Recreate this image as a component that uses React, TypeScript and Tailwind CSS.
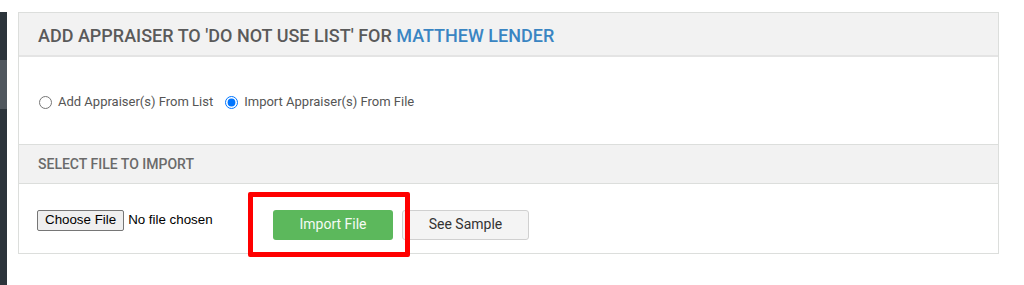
export default function App() {
  return (
    <div className="relative flex h-[285px] w-[1024px] bg-white" style={{ fontFamily: "Roboto, 'Liberation Sans', sans-serif" }}>
      {/* Sidebar edge */}
      <div className="flex w-[7px] flex-col pt-[12px]">
        <div className="h-[48px] bg-[#2c343b]" />
        <div className="h-[49px] bg-[#50575e]" />
        <div className="flex-1 bg-[#2c343b]" />
      </div>

      <div className="ml-[11px] mt-[12px] w-[981px]">
        <div className="border border-[#dcdedc] bg-white">
          {/* Header */}
          <div className="flex h-[44px] items-center border-b-2 border-[#e4e4e4] bg-[#f2f2f2] px-[19px] pt-[2px]">
            <h2 className="text-[18px] font-medium uppercase text-[#5a5a5a]">
              Add Appraiser to 'Do Not Use List' for <span className="text-[#3a85c2]">Matthew Lender</span>
            </h2>
          </div>

          {/* Mode choice */}
          <div className="flex h-[87px] items-center gap-[12px] px-[20px] pt-[3px] text-[13px] text-[#555]">
            <label className="flex items-center gap-[6px]">
              <input type="radio" name="mode" className="m-0 h-[13px] w-[13px]" />
              Add Appraiser(s) From List
            </label>
            <label className="flex items-center gap-[6px]">
              <input type="radio" name="mode" defaultChecked className="m-0 h-[13px] w-[13px]" />
              Import Appraiser(s) From File
            </label>
          </div>

          {/* Section header */}
          <div className="flex h-[40px] items-center border-y border-[#dcdedc] bg-[#f2f2f2] px-[19px]">
            <span className="text-[14px] font-medium uppercase text-[#6a6a6a]">Select File to Import</span>
          </div>

          {/* File row */}
          <div className="flex h-[69px] items-center px-[19px] pt-[3px]">
            <div className="-ml-[1px] flex w-[236px] items-center text-[13.33px]" style={{ fontFamily: "'Liberation Sans', Arial, sans-serif" }}>
              <button className="h-[21px] rounded-[2px] border border-[#767676] bg-[#efefef] px-[7px] leading-none text-black">Choose File</button>
              <span className="ml-[4px] text-black">No file chosen</span>
            </div>
            <button className="mt-[9px] h-[30px] w-[120px] rounded-[3px] bg-[#5cb85c] text-[14px] text-[#f4fbf4]">Import File</button>
            <button className="ml-[9px] mt-[9px] h-[30px] w-[127px] rounded-[3px] border border-[#d0d0d0] bg-[#f4f4f4] text-[14px] text-[#333]">See Sample</button>
          </div>
        </div>
      </div>

      {/* Annotation box */}
      <div className="absolute left-[248px] top-[192px] h-[65px] w-[162px] rounded-[2px] border-[5px] border-[#ff0000]" />
    </div>
  );
}
